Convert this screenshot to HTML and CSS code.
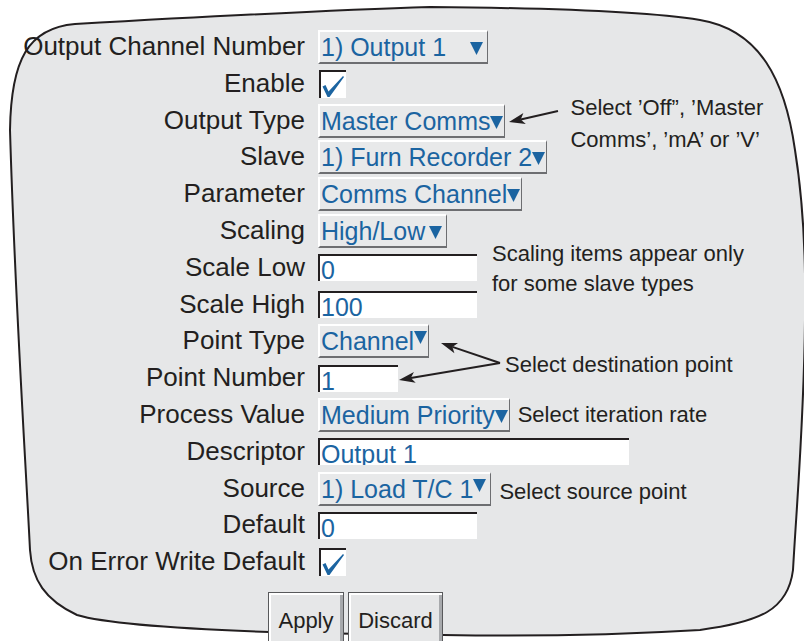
FILE: index.html
```html
<!DOCTYPE html>
<html lang="en">

<head>
    <meta charset="UTF-8">
    <meta name="viewport" content="width=device-width, initial-scale=1.0">
    <title> Output Channel Configuration </title>
    <link rel="stylesheet" href="styles.css">
</head>

<body>
    <div class="screen">
        <!-- panel outline -->
        <svg class="panel-shape" width="804" height="641" viewBox="0 0 804 641">
            <path d="M10,130 C11,60 28,28 75,24 C200,17 330,10 430,7 C550,8 650,12 700,20 C760,30 785,80 795,150
                     C803,200 806,260 805,320 C804,420 797,500 793,570 C788,610 760,622 700,630
                     C600,636 500,636 443,635 L300,633 C200,630 110,625 77,615 C45,600 32,580 30,550
                     C25,450 15,300 10,130 Z" fill="#e6e7e8" stroke="#231f20" stroke-width="2" />
        </svg>

        <div class="form">
            <div class="label">Output Channel Number</div>
            <div class="value">
                <span class="select">1) Output 1<svg class="caret caret-gap" viewBox="0 0 13 13"><polygon points="0,0 13,0 6.5,13" /></svg></span>
            </div>

            <div class="label">Enable</div>
            <div class="value">
                <span class="check"><svg viewBox="0 0 25 26"><path d="M1.5,14.5 L4.5,13 L7.5,19.5 L22,4 L23,5 L8.5,25 L6.5,25 Z" /></svg></span>
            </div>

            <div class="label">Output Type</div>
            <div class="value">
                <span class="select">Master Comms<svg class="caret" viewBox="0 0 13 13"><polygon points="0,0 13,0 6.5,13" /></svg></span>
                <span class="note note-type">Select ’Off”, ’Master<br>Comms’, ’mA’ or ’V’</span>
            </div>

            <div class="label">Slave</div>
            <div class="value">
                <span class="select">1) Furn Recorder 2<svg class="caret" viewBox="0 0 13 13"><polygon points="0,0 13,0 6.5,13" /></svg></span>
            </div>

            <div class="label">Parameter</div>
            <div class="value">
                <span class="select">Comms Channel<svg class="caret" viewBox="0 0 13 13"><polygon points="0,0 13,0 6.5,13" /></svg></span>
            </div>

            <div class="label">Scaling</div>
            <div class="value">
                <span class="select select-pad">High/Low<svg class="caret caret-small-gap" viewBox="0 0 13 13"><polygon points="0,0 13,0 6.5,13" /></svg></span>
            </div>

            <div class="label">Scale Low</div>
            <div class="value">
                <span class="field field-short">0</span>
                <span class="note note-scaling">Scaling items appear only<br>for some slave types</span>
            </div>

            <div class="label">Scale High</div>
            <div class="value">
                <span class="field field-short">100</span>
            </div>

            <div class="label">Point Type</div>
            <div class="value">
                <span class="select">Channel<svg class="caret caret-raised" viewBox="0 0 13 13"><polygon points="0,0 13,0 6.5,13" /></svg></span>
            </div>

            <div class="label">Point Number</div>
            <div class="value">
                <span class="field field-tiny">1</span>
                <span class="note note-dest">Select destination point</span>
            </div>

            <div class="label">Process Value</div>
            <div class="value">
                <span class="select">Medium Priority<svg class="caret" viewBox="0 0 13 13"><polygon points="0,0 13,0 6.5,13" /></svg></span>
                <span class="note note-inline">Select iteration rate</span>
            </div>

            <div class="label">Descriptor</div>
            <div class="value">
                <span class="field field-long">Output 1</span>
            </div>

            <div class="label">Source</div>
            <div class="value">
                <span class="select select-pad">1) Load T/C 1<svg class="caret caret-raised" viewBox="0 0 13 13"><polygon points="0,0 13,0 6.5,13" /></svg></span>
                <span class="note note-inline note-low">Select source point</span>
            </div>

            <div class="label">Default</div>
            <div class="value">
                <span class="field field-short">0</span>
            </div>

            <div class="label">On Error Write Default</div>
            <div class="value">
                <span class="check"><svg viewBox="0 0 25 26"><path d="M1.5,14.5 L4.5,13 L7.5,19.5 L22,4 L23,5 L8.5,25 L6.5,25 Z" /></svg></span>
            </div>
        </div>

        <div class="buttons">
            <button class="btn btn-apply">Apply</button>
            <button class="btn btn-discard">Discard</button>
        </div>

        <!-- callout arrows -->
        <svg class="arrows" width="804" height="641" viewBox="0 0 804 641">
            <line x1="558" y1="111" x2="520.7" y2="119.4" />
            <polygon points="509,122 525.8,123.9 520.7,119.4 523.4,113.1" />
            <line x1="500" y1="363" x2="452.4" y2="346.9" />
            <polygon points="441,343 454.4,353.3 452.4,346.9 458.0,342.9" />
            <line x1="500" y1="363" x2="410.8" y2="378" />
            <polygon points="399,380 415.7,382.7 410.8,378 413.9,371.9" />
        </svg>
    </div>
</body>

</html>
```

FILE: styles.css
```css
body {
    margin: 0px;
    padding: 0px;
    background-color: white;
    font-family: 'Liberation Sans', Arial, sans-serif;
    color: #231f20;
}

.screen {
    position: relative;
    width: 804px;
    height: 641px;
    overflow: hidden;
}

.panel-shape {
    position: absolute;
    top: 0;
    left: 0;
    z-index: 0;
}

.form {
    position: relative;
    z-index: 1;
    display: grid;
    grid-template-columns: 305px 1fr;
    grid-auto-rows: 36.8px;
    column-gap: 13px;
    padding-top: 28.6px;
}

.label {
    font-size: 26px;
    text-align: right;
    align-self: center;
    white-space: nowrap;
    line-height: 30px;
    margin-top: -2px;
}

.value {
    display: flex;
    align-items: center;
}

/* drop-down boxes */
.select {
    display: inline-flex;
    align-items: flex-start;
    box-sizing: border-box;
    height: 34px;
    padding-left: 1px;
    padding-right: 1px;
    font-size: 25px;
    line-height: 30px;
    color: #1b64a1;
    white-space: nowrap;
    background-color: #e8e9ea;
    border-top: 2px solid #ffffff;
    border-left: 2px solid #ffffff;
    border-right: 1px solid #6d6e71;
    border-bottom: 2px solid #6d6e71;
}

.select-pad {
    padding-right: 4px;
}

.caret {
    width: 13px;
    height: 13px;
    margin-top: 10px;
    fill: #1b64a1;
    flex: none;
}

.caret-gap {
    margin-left: 24px;
    margin-right: 3px;
}

.caret-small-gap {
    margin-left: 4px;
}

.caret-raised {
    margin-top: 5px;
}

/* text fields */
.field {
    display: block;
    box-sizing: border-box;
    height: 27px;
    padding-left: 1px;
    overflow: hidden;
    font-size: 25px;
    line-height: 28px;
    color: #1b64a1;
    background-color: white;
    border-top: 2px solid #231f20;
    border-left: 2px solid #231f20;
    white-space: nowrap;
}

.field-short {
    width: 159px;
}

.field-tiny {
    width: 80px;
}

.field-long {
    width: 311px;
}

/* check boxes */
.check {
    display: block;
    box-sizing: border-box;
    width: 27px;
    height: 28px;
    margin-left: 1px;
    background-color: white;
    border-top: 2px solid #231f20;
    border-left: 2px solid #231f20;
}

.check svg {
    display: block;
    width: 25px;
    height: 26px;
    fill: #1b64a1;
}

/* annotations */
.note {
    font-size: 22px;
    white-space: nowrap;
}

.note-type {
    align-self: flex-start;
    margin-left: 65px;
    margin-top: -10px;
    line-height: 32px;
}

.note-scaling {
    align-self: flex-start;
    margin-left: 15px;
    margin-top: -10px;
    line-height: 30px;
}

.note-dest {
    align-self: flex-start;
    margin-left: 107px;
    margin-top: -10px;
    line-height: 30px;
}

.note-inline {
    margin-left: 8px;
}

.note-low {
    margin-top: 6px;
}

/* buttons */
.buttons {
    position: relative;
    z-index: 1;
    display: flex;
    gap: 4px;
    padding-left: 268px;
    margin-top: 11.4px;
}

.btn {
    box-sizing: border-box;
    height: 58px;
    padding: 0px;
    font-family: 'Liberation Sans', Arial, sans-serif;
    font-size: 22px;
    line-height: 24px;
    color: #231f20;
    text-align: center;
    background-color: #e6e7e8;
    border: 1px solid #58595b;
    box-shadow: inset 2px 2px 0 #ffffff, inset -3px 0 0 #a7a9ac;
}

.btn-apply {
    width: 76px;
}

.btn-discard {
    width: 95px;
}

.arrows {
    position: absolute;
    top: 0;
    left: 0;
    z-index: 2;
    pointer-events: none;
}

.arrows line {
    stroke: #231f20;
    stroke-width: 2;
}

.arrows polygon {
    fill: #231f20;
}
```
